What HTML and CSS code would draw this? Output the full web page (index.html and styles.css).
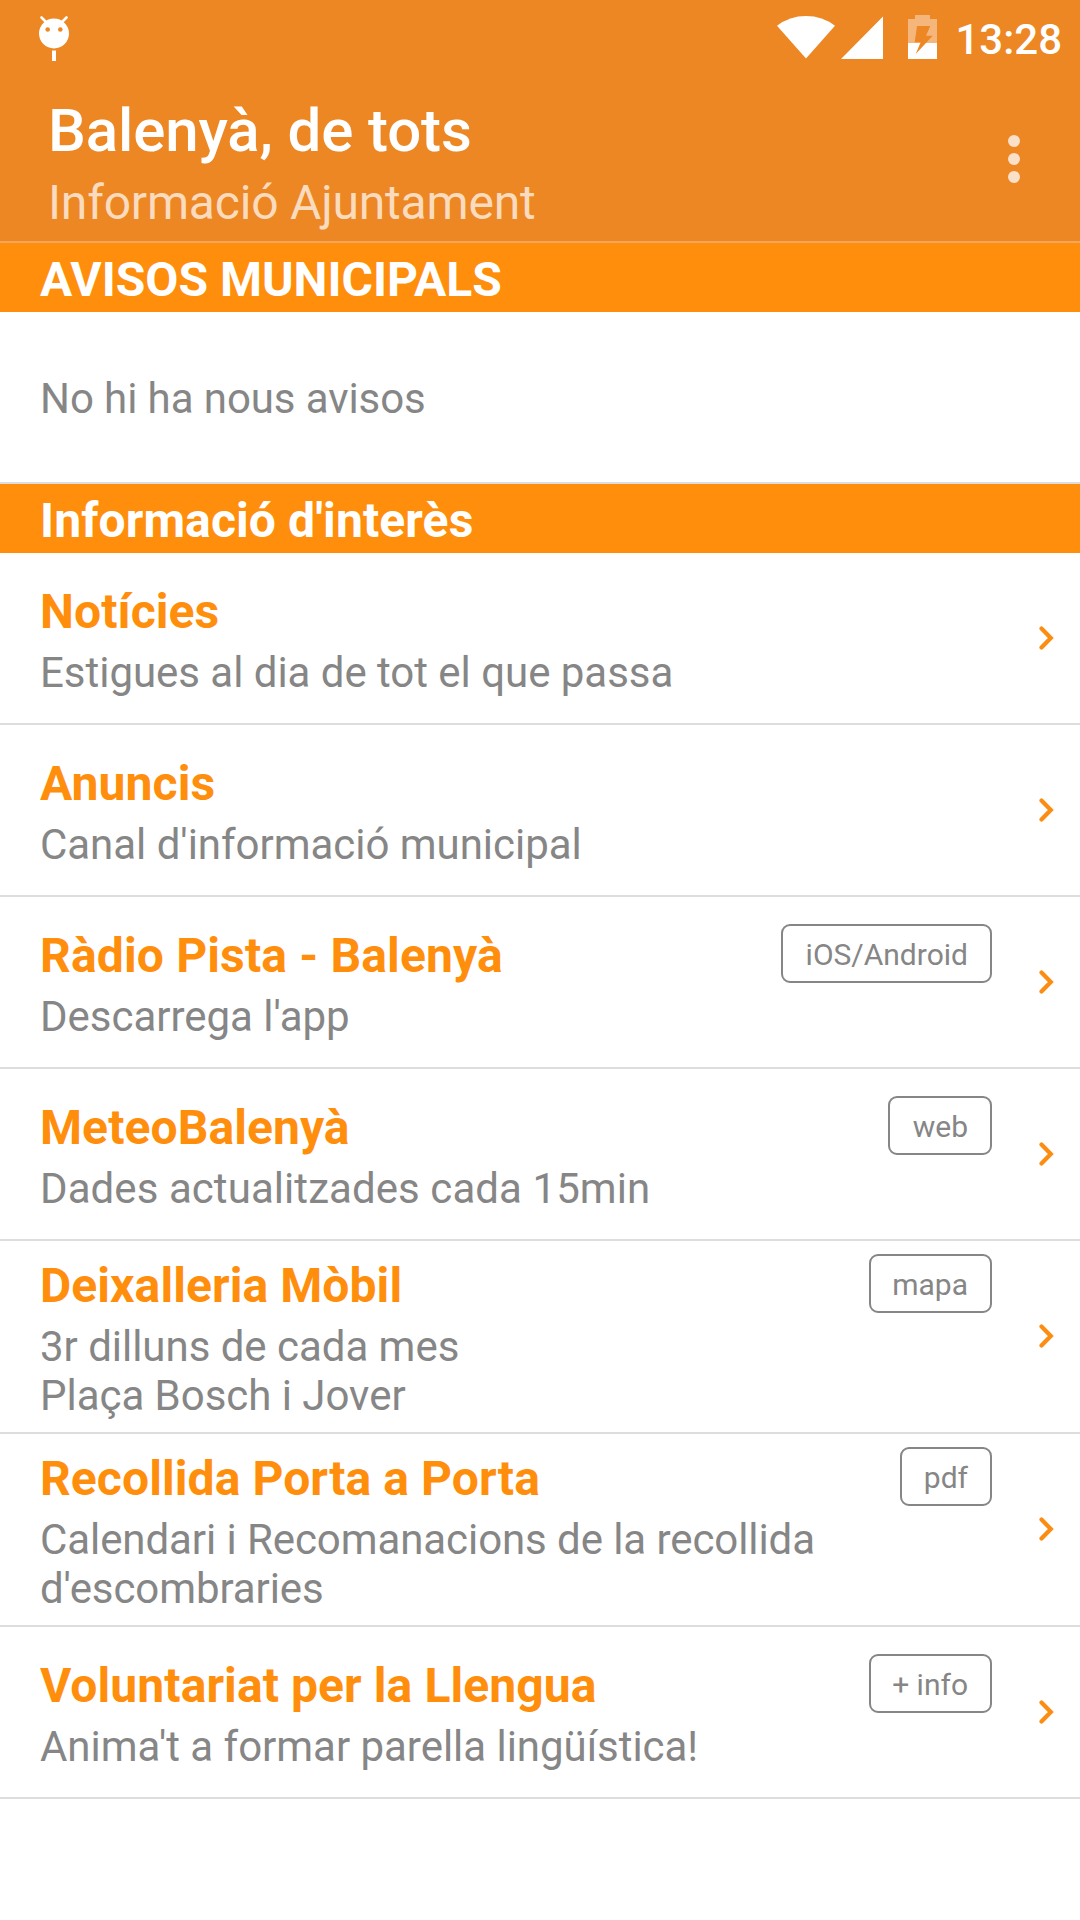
FILE: index.html
```html
<!DOCTYPE html>
<html lang="ca">
<head>
<meta charset="utf-8">
<title>Balenyà, de tots</title>
<link rel="stylesheet" href="styles.css">
</head>
<body>
<svg class="defs" width="0" height="0" aria-hidden="true">
  <symbol id="chevron" viewBox="0 0 16 26"><path d="M2.500 3.600 11.800 13 2.500 22.400" fill="none" stroke="currentColor" stroke-width="4.200" stroke-linecap="round" stroke-linejoin="miter"/></symbol>
</svg>
<header class="top">
  <div class="status">
    <svg class="droid" width="32" height="48" viewBox="0 0 32 48">
      <path d="M3.5 3.5l6 6M28.500 3.500l-6 6" stroke="#fff" stroke-width="2.600" stroke-linecap="round"/>
      <circle cx="16" cy="19.500" r="15" fill="#fff"/>
      <circle cx="9.700" cy="15.500" r="2.300" fill="#ec8724"/>
      <circle cx="22.300" cy="15.500" r="2.300" fill="#ec8724"/>
      <path d="M14 36.500h4V47h-4z" fill="#fff"/>
    </svg>
    <div class="indicators">
      <svg class="wifi" width="60" height="44" viewBox="0 0 60 44"><path d="M30 43.500 1 10.800Q13.500 1 30 1t29 9.800z" fill="#fff"/></svg>
      <svg class="signal" width="42" height="44" viewBox="0 0 42 44"><path d="M42 1.500V44H0z" fill="#fff"/></svg>
      <svg class="battery" width="29" height="44" viewBox="0 0 29 44">
        <path d="M7 0h15v4h7v24H0V4h7z" fill="#f5b67c"/>
        <path d="M0 28h29v16H0z" fill="#fff"/>
        <path d="M9 11h13.300L18 20.700h6.700L7.700 39l5-11.700h-6z" fill="#ec8724"/>
      </svg>
      <span class="clock">13:28</span>
    </div>
  </div>
  <div class="toolbar">
    <div>
      <h1 class="app-title">Balenyà, de tots</h1>
      <p class="app-subtitle">Informació Ajuntament</p>
    </div>
    <svg class="more" width="12" height="48" viewBox="0 0 12 48" fill="#fae0c8"><circle cx="6" cy="6" r="6"/><circle cx="6" cy="24" r="6"/><circle cx="6" cy="42" r="6"/></svg>
  </div>
</header>
<main>
  <h2 class="section">AVISOS MUNICIPALS</h2>
  <p class="empty">No hi ha nous avisos</p>
  <h2 class="section section-loose">Informació d'interès</h2>
  <div class="row">
    <div class="body">
      <div class="head"><h3 class="title">Notícies</h3></div>
      <p class="desc">Estigues al dia de tot el que passa</p>
    </div>
    <svg class="chevron"><use href="#chevron"/></svg>
  </div>
  <div class="row">
    <div class="body">
      <div class="head"><h3 class="title">Anuncis</h3></div>
      <p class="desc">Canal d'informació municipal</p>
    </div>
    <svg class="chevron"><use href="#chevron"/></svg>
  </div>
  <div class="row">
    <div class="body">
      <div class="head"><h3 class="title title-loose">Ràdio Pista - Balenyà</h3><span class="tag tag-wide">iOS/Android</span></div>
      <p class="desc">Descarrega l'app</p>
    </div>
    <svg class="chevron"><use href="#chevron"/></svg>
  </div>
  <div class="row">
    <div class="body">
      <div class="head"><h3 class="title">MeteoBalenyà</h3><span class="tag tag-wide">web</span></div>
      <p class="desc desc-loose">Dades actualitzades cada 15min</p>
    </div>
    <svg class="chevron"><use href="#chevron"/></svg>
  </div>
  <div class="row">
    <div class="body">
      <div class="head"><h3 class="title">Deixalleria Mòbil</h3><span class="tag tag-tight">mapa</span></div>
      <p class="desc">3r dilluns de cada mes<br>Plaça Bosch i Jover</p>
    </div>
    <svg class="chevron"><use href="#chevron"/></svg>
  </div>
  <div class="row">
    <div class="body">
      <div class="head"><h3 class="title">Recollida Porta a Porta</h3><span class="tag">pdf</span></div>
      <p class="desc desc-tight">Calendari i Recomanacions de la recollida d'escombraries</p>
    </div>
    <svg class="chevron"><use href="#chevron"/></svg>
  </div>
  <div class="row">
    <div class="body">
      <div class="head"><h3 class="title">Voluntariat per la Llengua</h3><span class="tag tag-tight">+ info</span></div>
      <p class="desc">Anima't a formar parella lingüística!</p>
    </div>
    <svg class="chevron"><use href="#chevron"/></svg>
  </div>
</main>
</body>
</html>
```

FILE: styles.css
```css
* { box-sizing: border-box; }

body {
  margin: 0;
  background: #fff;
  color: #868686;
  font-family: Roboto, sans-serif;
}

h1, h2, h3, p { margin: 0; }
svg { display: block; flex: none; }
.defs { position: absolute; }

.top {
  height: 243px;
  background: #ec8724;
  border-bottom: 2px solid #f3a65c;
  color: #fff;
}

.status {
  display: flex;
  justify-content: space-between;
  align-items: flex-start;
  height: 72px;
  padding: 14px 18px 0 38px;
}

.indicators { display: flex; align-items: flex-start; }
.wifi, .signal { margin-top: 1px; }
.signal { margin-left: 5px; }
.battery { margin: 1px 18px 0 25px; }

.clock {
  font-size: 42px;
  font-weight: 500;
  line-height: 49px;
  margin-top: 1px;
}

.toolbar {
  display: flex;
  justify-content: space-between;
  align-items: flex-start;
  padding: 24px 60px 0 48px;
}

.app-title {
  font-size: 60px;
  font-weight: 500;
  letter-spacing: -0.13px;
  line-height: 70px;
}

.app-subtitle {
  color: #fbdbbe;
  font-size: 48px;
  letter-spacing: -0.19px;
  line-height: 56px;
  margin-top: 9px;
}

.more { margin-top: 39px; }

.section {
  height: 69px;
  padding: 9px 40px 0;
  background: #ff8e0c;
  color: #fff;
  font-size: 48px;
  font-weight: 700;
  line-height: 56px;
}

.section-loose { letter-spacing: 0.12px; }

.empty {
  height: 172px;
  padding: 62px 40px 0;
  border-bottom: 2px solid #ddd;
  font-size: 42px;
  letter-spacing: -0.08px;
  line-height: 49px;
}

.row {
  display: flex;
  align-items: center;
  min-height: 172px;
  padding-right: 25px;
  border-bottom: 2px solid #ddd;
}

.body { flex: 1; padding: 17px 0 12px 40px; }

.head {
  display: flex;
  justify-content: space-between;
  align-items: flex-start;
  height: 56px;
  margin-bottom: 8px;
}

.title {
  color: #ff8e0c;
  font-size: 48px;
  font-weight: 700;
  letter-spacing: 0.09px;
  line-height: 56px;
}

.title-loose { letter-spacing: 0.16px; }

.tag {
  height: 59px;
  margin-top: -4px;
  padding: 0 22px;
  border: 2px solid #868686;
  border-radius: 9px;
  font-size: 30px;
  line-height: 57px;
}

.tag-wide { padding-left: 23px; }
.tag-tight { padding-left: 21px; }

.desc {
  font-size: 42px;
  letter-spacing: -0.03px;
  line-height: 49px;
}

.desc-loose { letter-spacing: 0.07px; }
.desc-tight { letter-spacing: -0.08px; }

.chevron {
  width: 16px;
  height: 26px;
  margin: 0 0 0.5px 47px;
  color: #fb8d12;
}
```
